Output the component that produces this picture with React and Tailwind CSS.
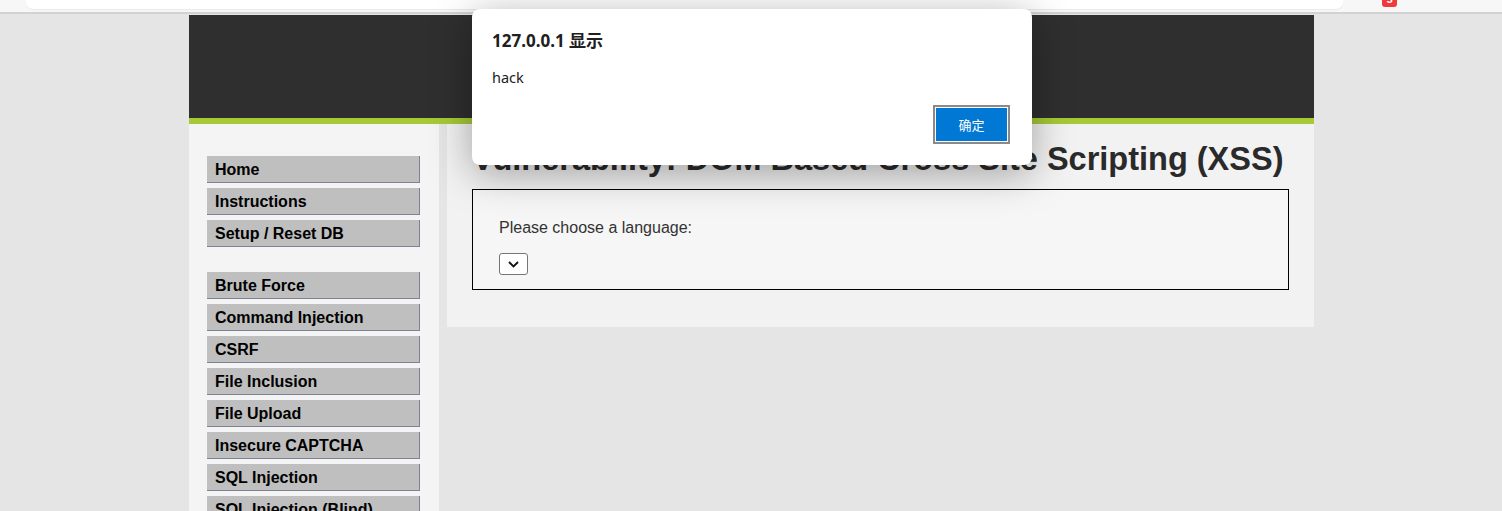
import React from "react";

const group1 = ["Home", "Instructions", "Setup / Reset DB"];
const group2 = [
  "Brute Force",
  "Command Injection",
  "CSRF",
  "File Inclusion",
  "File Upload",
  "Insecure CAPTCHA",
  "SQL Injection",
  "SQL Injection (Blind)",
];

function MenuItem({ label }) {
  return (
    <div className="h-[27px] w-[213px] bg-[#bfbfbf] border-r border-b border-[#7b8394] pl-[8px] pt-[5px] text-[16px] leading-[18px] font-bold text-black whitespace-nowrap">
      {label}
    </div>
  );
}

export default function App() {
  return (
    <div className="relative w-[1502px] h-[511px] overflow-hidden bg-[#e5e5e5] font-['Liberation_Sans',Arial,sans-serif]">
      {/* browser chrome strip */}
      <div className="h-[14px] bg-[#f7f7f7] border-b-2 border-[#d2d2d2] flex items-start">
        <div className="ml-[26px] w-[1317px] h-[9px] bg-white rounded-b-[7px] shadow-[0_1px_1px_rgba(0,0,0,0.06)]" />
        <div className="ml-[39px] w-[15px] h-[7px] bg-[#ee3a3a] rounded-b-[3px] overflow-hidden flex justify-center">
          <span className="text-white text-[11px] font-bold leading-none -mt-[6px]">5</span>
        </div>
      </div>

      {/* page container */}
      <div className="ml-[189px] mt-px w-[1125px]">
        <div className="h-[103px] bg-[#2f2f2f]" />
        <div className="h-[6px] bg-[#a6c935]" />
        <div className="flex items-start gap-[8px]">
          {/* sidebar */}
          <div className="w-[250px] h-[400px] bg-[#f4f4f4] pt-[32px] pl-[18px]">
            <div className="flex flex-col gap-[5px]">
              {group1.map((l) => (
                <MenuItem key={l} label={l} />
              ))}
            </div>
            <div className="flex flex-col gap-[5px] mt-[25px]">
              {group2.map((l) => (
                <MenuItem key={l} label={l} />
              ))}
            </div>
          </div>
          {/* main */}
          <div className="flex-1 h-[203px] bg-[#f2f2f2] px-[25px] pt-[17px]">
            <h1 className="h-[37px] text-[32.5px] leading-[37px] font-bold text-[#2a2a2a] whitespace-nowrap">
              Vulnerability: DOM Based Cross Site Scripting (XSS)
            </h1>
            <div className="mt-[11px] border border-black bg-[#f5f6f5] pl-[26px] pt-[29px] pb-[14px]">
              <p className="text-[16px] leading-[18px] text-[#333]">Please choose a language:</p>
              <div className="mt-[16px] w-[29px] h-[22px] bg-white border border-[#767676] rounded-[3px] flex items-center justify-center">
                <svg width="11" height="7" viewBox="0 0 11 7" fill="none">
                  <path d="M1 1l4.5 4.5L10 1" stroke="#111" strokeWidth="1.8" />
                </svg>
              </div>
            </div>
          </div>
        </div>
      </div>

      {/* alert dialog */}
      <div className="absolute left-[472px] top-[9px] w-[560px] h-[156px] bg-white rounded-[8px] shadow-[0_8px_40px_rgba(0,0,0,0.35)] px-[20px] pt-[20px] font-['Noto_Sans','Noto_Sans_CJK_SC',sans-serif]">
        <div className="text-[17px] leading-[24px] font-bold text-[#202020]">127.0.0.1 显示</div>
        <div className="mt-[14px] text-[14.5px] leading-[20px] text-[#202020]">hack</div>
        <div className="flex justify-end mt-[18px] pr-[2px]">
          <div className="w-[77px] h-[39px] border-2 border-[#8a8a8a] p-px bg-white">
            <div className="w-full h-full bg-[#0078d4] flex items-center justify-center text-white text-[13px] font-['Noto_Sans_CJK_SC',sans-serif]">
              确定
            </div>
          </div>
        </div>
      </div>
    </div>
  );
}
